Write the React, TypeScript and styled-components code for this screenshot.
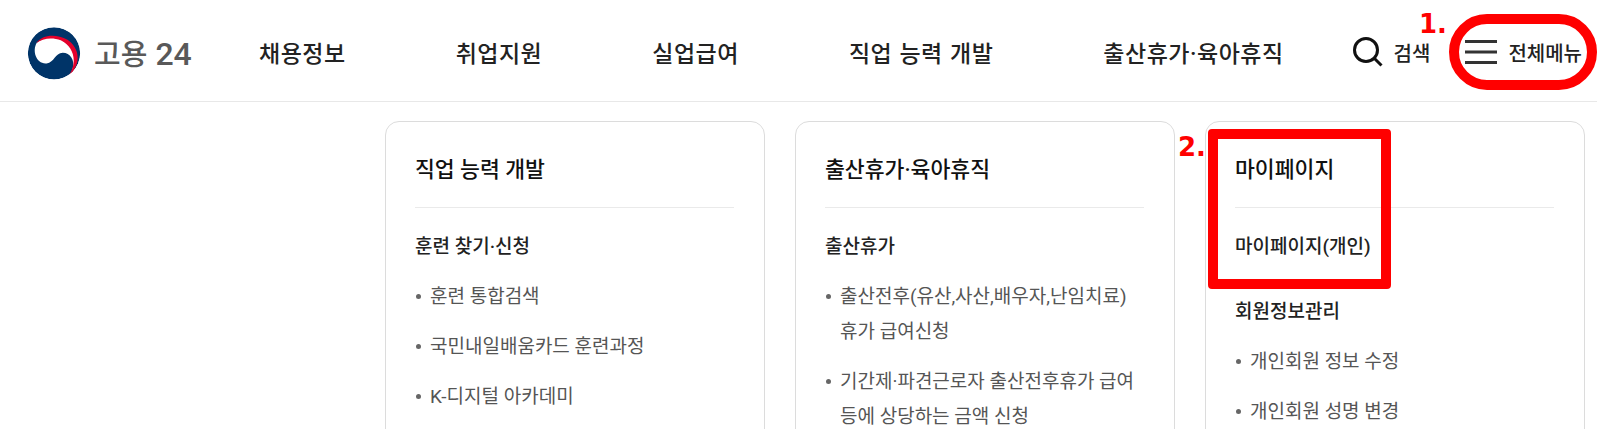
import { createGlobalStyle } from "styled-components";
import styled from "styled-components";

const GlobalStyle = createGlobalStyle`
  html, body {
    margin: 0;
    height: 100%;
    overflow: hidden;
    background: #fff;
  }
  body {
    font-family: Roboto, "Noto Sans CJK KR", "Noto Sans", sans-serif;
    color: #222;
  }
`;

const Page = styled.div`
  position: relative;
  width: 1597px;
  height: 429px;
  overflow: hidden;
`;

const Header = styled.header`
  box-sizing: border-box;
  display: flex;
  align-items: center;
  height: 102px;
  padding: 3px 15px 0 27px;
  border-bottom: 1px solid #e8e8e8;
`;

const Logo = styled.a`
  display: flex;
  align-items: center;
  gap: 13px;
  width: 232px;
  flex: none;
`;

const EmblemMark = styled.svg`
  flex: none;
  margin-top: 3px;
`;

const LogoText = styled.span`
  font-size: 29px;
  font-weight: 500;
  color: #595959;
`;

const LogoDigits = styled.span`
  margin-left: 8px;
  font-size: 32px;
  font-weight: 500;
`;

const Nav = styled.nav`
  display: flex;
  gap: 110px;
  flex: 1;
`;

const NavItem = styled.a`
  font-size: 23px;
  font-weight: 500;
  color: #222;
  white-space: nowrap;
  letter-spacing: 0.5px;
  word-spacing: 1px;
`;

const HeaderButton = styled.button<{ $gap: number; $left: number }>`
  display: flex;
  align-items: center;
  gap: ${(p) => p.$gap}px;
  margin-left: ${(p) => p.$left}px;
  padding: 0;
  border: 0;
  background: none;
  font: inherit;
  font-size: 20px;
  font-weight: 500;
  color: #222;
  white-space: nowrap;
`;

const Main = styled.main`
  display: flex;
  justify-content: flex-end;
  gap: 30px;
  padding: 19px 12px 0 0;
`;

const Card = styled.section`
  box-sizing: border-box;
  width: 380px;
  height: 400px;
  padding: 32px 30px 0 29px;
  border: 1px solid #dcdcdc;
  border-radius: 14px;
`;

const CardTitle = styled.h2`
  margin: 0;
  padding-bottom: 21px;
  font-size: 21.6px;
  line-height: 32px;
  font-weight: 500;
  color: #111;
  border-bottom: 1px solid #eaeaea;
`;

const Group = styled.div`
  margin-top: 24px;
  & + & {
    margin-top: 35px;
  }
`;

const GroupTitle = styled.h3`
  margin: 0 0 17px;
  font-size: 19px;
  line-height: 30px;
  font-weight: 500;
  color: #222;
`;

const List = styled.ul`
  display: flex;
  flex-direction: column;
  gap: 15px;
  margin: 0;
  padding: 0;
  list-style: none;
`;

const Item = styled.li`
  position: relative;
  padding-left: 15px;
  font-size: 19px;
  line-height: 35px;
  color: #555;
  &::before {
    content: "";
    position: absolute;
    left: 1px;
    top: 15px;
    width: 5px;
    height: 5px;
    border-radius: 50%;
    background: #666;
  }
`;

const Ring = styled.div`
  position: absolute;
  left: 1449px;
  top: 14px;
  box-sizing: border-box;
  width: 148px;
  height: 76px;
  border: 10px solid #ff0000;
  border-radius: 38px;
`;

const Box = styled.div`
  position: absolute;
  left: 1208px;
  top: 129px;
  box-sizing: border-box;
  width: 183px;
  height: 160px;
  border: 10px solid #ff0000;
  border-radius: 4px;
`;

const Mark = styled.span<{ $x: number; $y: number }>`
  position: absolute;
  left: ${(p) => p.$x}px;
  top: ${(p) => p.$y}px;
  font-family: "DejaVu Sans", sans-serif;
  font-size: 26px;
  line-height: 30px;
  font-weight: 700;
  color: #ff0000;
`;

function Emblem() {
  return (
    <EmblemMark width="54" height="53" viewBox="0 0 160 155">
      <defs>
        <clipPath id="emblemClip">
          <circle cx="80" cy="77" r="77.5" />
        </clipPath>
      </defs>
      <g clipPath="url(#emblemClip)">
        <circle cx="80" cy="77" r="77.5" fill="#003468" />
        <path
          d="M29 46C14 70 28 110 58 107C82 103 82 76 106 75C128 75 142 98 136 120C132 135 124 148 113 155C155 120 150 60 100 36C70 26 45 30 29 46Z"
          fill="#fff"
        />
        <path
          d="M27 47C45 22 85 18 120 37C150 57 172 105 113 157C152 115 145 60 100 38C75 29 46 32 27 47Z"
          fill="#e4002b"
        />
      </g>
    </EmblemMark>
  );
}

function SearchIcon() {
  return (
    <svg width="30" height="30" viewBox="0 0 30 30" fill="none" stroke="#111" strokeWidth="3">
      <circle cx="13" cy="13" r="11.5" />
      <path d="M21.5 21.5L28.5 28.5" />
    </svg>
  );
}

function MenuIcon() {
  return (
    <svg width="32" height="26" viewBox="0 0 32 26" fill="none" stroke="#333" strokeWidth="3">
      <path d="M0 2.5H32M0 13H32M0 23.5H32" />
    </svg>
  );
}

export default function App() {
  return (
    <Page>
      <GlobalStyle />
      <Header>
        <Logo>
          <Emblem />
          <LogoText>
            고용<LogoDigits>24</LogoDigits>
          </LogoText>
        </Logo>
        <Nav>
          <NavItem>채용정보</NavItem>
          <NavItem>취업지원</NavItem>
          <NavItem>실업급여</NavItem>
          <NavItem>직업 능력 개발</NavItem>
          <NavItem>출산휴가·육아휴직</NavItem>
        </Nav>
        <HeaderButton $gap={11} $left={0}>
          <SearchIcon />
          검색
        </HeaderButton>
        <HeaderButton $gap={11} $left={35}>
          <MenuIcon />
          전체메뉴
        </HeaderButton>
      </Header>
      <Main>
        <Card>
          <CardTitle>직업 능력 개발</CardTitle>
          <Group>
            <GroupTitle>훈련 찾기·신청</GroupTitle>
            <List>
              <Item>훈련 통합검색</Item>
              <Item>국민내일배움카드 훈련과정</Item>
              <Item>K-디지털 아카데미</Item>
            </List>
          </Group>
        </Card>
        <Card>
          <CardTitle>출산휴가·육아휴직</CardTitle>
          <Group>
            <GroupTitle>출산휴가</GroupTitle>
            <List>
              <Item>출산전후(유산,사산,배우자,난임치료) 휴가 급여신청</Item>
              <Item>기간제·파견근로자 출산전후휴가 급여 등에 상당하는 금액 신청</Item>
            </List>
          </Group>
        </Card>
        <Card>
          <CardTitle>마이페이지</CardTitle>
          <Group>
            <GroupTitle>마이페이지(개인)</GroupTitle>
          </Group>
          <Group>
            <GroupTitle>회원정보관리</GroupTitle>
            <List>
              <Item>개인회원 정보 수정</Item>
              <Item>개인회원 성명 변경</Item>
            </List>
          </Group>
        </Card>
      </Main>
      <Ring />
      <Mark $x={1419} $y={9}>1.</Mark>
      <Mark $x={1178} $y={132}>2.</Mark>
      <Box />
    </Page>
  );
}
